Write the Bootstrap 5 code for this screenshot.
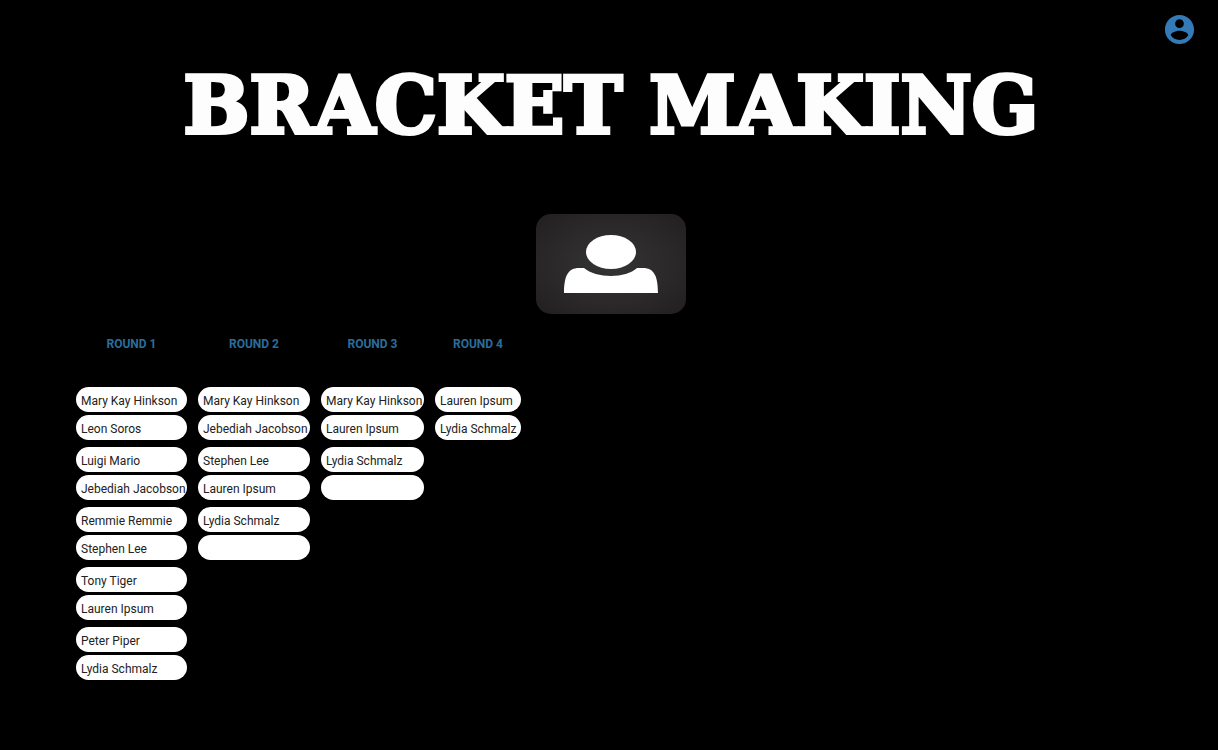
<!DOCTYPE html>
<html lang="en">
<head>
<meta charset="utf-8">
<meta name="viewport" content="width=device-width, initial-scale=1">
<title>Bracket Making</title>
<link href="https://cdn.jsdelivr.net/npm/bootstrap@5.3.0/dist/css/bootstrap.min.css" rel="stylesheet">
<style>
  body { background: #000; font-family: Roboto, sans-serif; }
  .top-bar { padding: 12px 21px 0; }
  .account-link { color: #337ab7; line-height: 0; }
  .page-main { padding: 0 72px 40px 76px; }
  .page-title { color: #fdfdfd; font: 700 78px/90px "DejaVu Serif", serif; margin: 14px 0 63px; -webkit-text-stroke: 4px #fdfdfd; }
  .bracket { display: grid; grid-template-columns: 111px 112px 103px 86px; column-gap: 11px; margin-top: 20px; }
  .round-title { color: #2a6d9c; font-size: 12px; font-weight: 700; line-height: 20px; margin-bottom: 33px; }
  .pairing { gap: 3px; margin-bottom: 7px; }
  .player { background: #fff; color: #222; height: 25px; line-height: 28px; font-size: 12px; border-radius: 13px; padding: 0 5px; white-space: nowrap; }
</style>
</head>
<body>
<header class="top-bar d-flex justify-content-end">
  <a href="#" class="account-link" aria-label="Account">
    <svg width="35" height="35" viewBox="0 0 24 24" fill="currentColor" aria-hidden="true"><path d="M12 2C6.48 2 2 6.48 2 12s4.480 10 10 10 10-4.480 10-10S17.520 2 12 2zm0 3c1.660 0 3 1.340 3 3s-1.340 3-3 3-3-1.340-3-3 1.340-3 3-3zm0 14.200c-2.500 0-4.710-1.280-6-3.220.030-1.990 4-3.080 6-3.080 1.990 0 5.970 1.090 6 3.080-1.290 1.940-3.500 3.220-6 3.220z"/></svg>
  </a>
</header>
<main class="page-main">
  <h1 class="page-title text-center text-nowrap d-flex justify-content-center">BRACKET MAKING</h1>
  <div class="d-flex justify-content-center">
    <svg width="150" height="100" viewBox="0 0 150 100" role="img" aria-label="Player">
      <defs><radialGradient id="panel" r="0.7"><stop offset="0" stop-color="#353535"/><stop offset="1" stop-color="#231f20"/></radialGradient></defs>
      <rect width="150" height="100" rx="15" fill="url(#panel)"/>
      <ellipse cx="75" cy="38" rx="25" ry="17" fill="#fff"/>
      <path d="M28 79C28 62 32 54 43 54H48C60 64.500 90 64.500 101 54H107C118 54 122 62 122 79Z" fill="#fff"/>
    </svg>
  </div>
  <div class="bracket">
    <section>
      <h2 class="round-title text-center">ROUND 1</h2>
      <div class="pairing d-flex flex-column"><div class="player">Mary Kay Hinkson</div><div class="player">Leon Soros</div></div>
      <div class="pairing d-flex flex-column"><div class="player">Luigi Mario</div><div class="player">Jebediah Jacobson</div></div>
      <div class="pairing d-flex flex-column"><div class="player">Remmie Remmie</div><div class="player">Stephen Lee</div></div>
      <div class="pairing d-flex flex-column"><div class="player">Tony Tiger</div><div class="player">Lauren Ipsum</div></div>
      <div class="pairing d-flex flex-column"><div class="player">Peter Piper</div><div class="player">Lydia Schmalz</div></div>
    </section>
    <section>
      <h2 class="round-title text-center">ROUND 2</h2>
      <div class="pairing d-flex flex-column"><div class="player">Mary Kay Hinkson</div><div class="player">Jebediah Jacobson</div></div>
      <div class="pairing d-flex flex-column"><div class="player">Stephen Lee</div><div class="player">Lauren Ipsum</div></div>
      <div class="pairing d-flex flex-column"><div class="player">Lydia Schmalz</div><div class="player"></div></div>
    </section>
    <section>
      <h2 class="round-title text-center">ROUND 3</h2>
      <div class="pairing d-flex flex-column"><div class="player">Mary Kay Hinkson</div><div class="player">Lauren Ipsum</div></div>
      <div class="pairing d-flex flex-column"><div class="player">Lydia Schmalz</div><div class="player"></div></div>
    </section>
    <section>
      <h2 class="round-title text-center">ROUND 4</h2>
      <div class="pairing d-flex flex-column"><div class="player">Lauren Ipsum</div><div class="player">Lydia Schmalz</div></div>
    </section>
  </div>
</main>
<script src="https://cdn.jsdelivr.net/npm/bootstrap@5.3.0/dist/js/bootstrap.bundle.min.js"></script>
</body>
</html>
